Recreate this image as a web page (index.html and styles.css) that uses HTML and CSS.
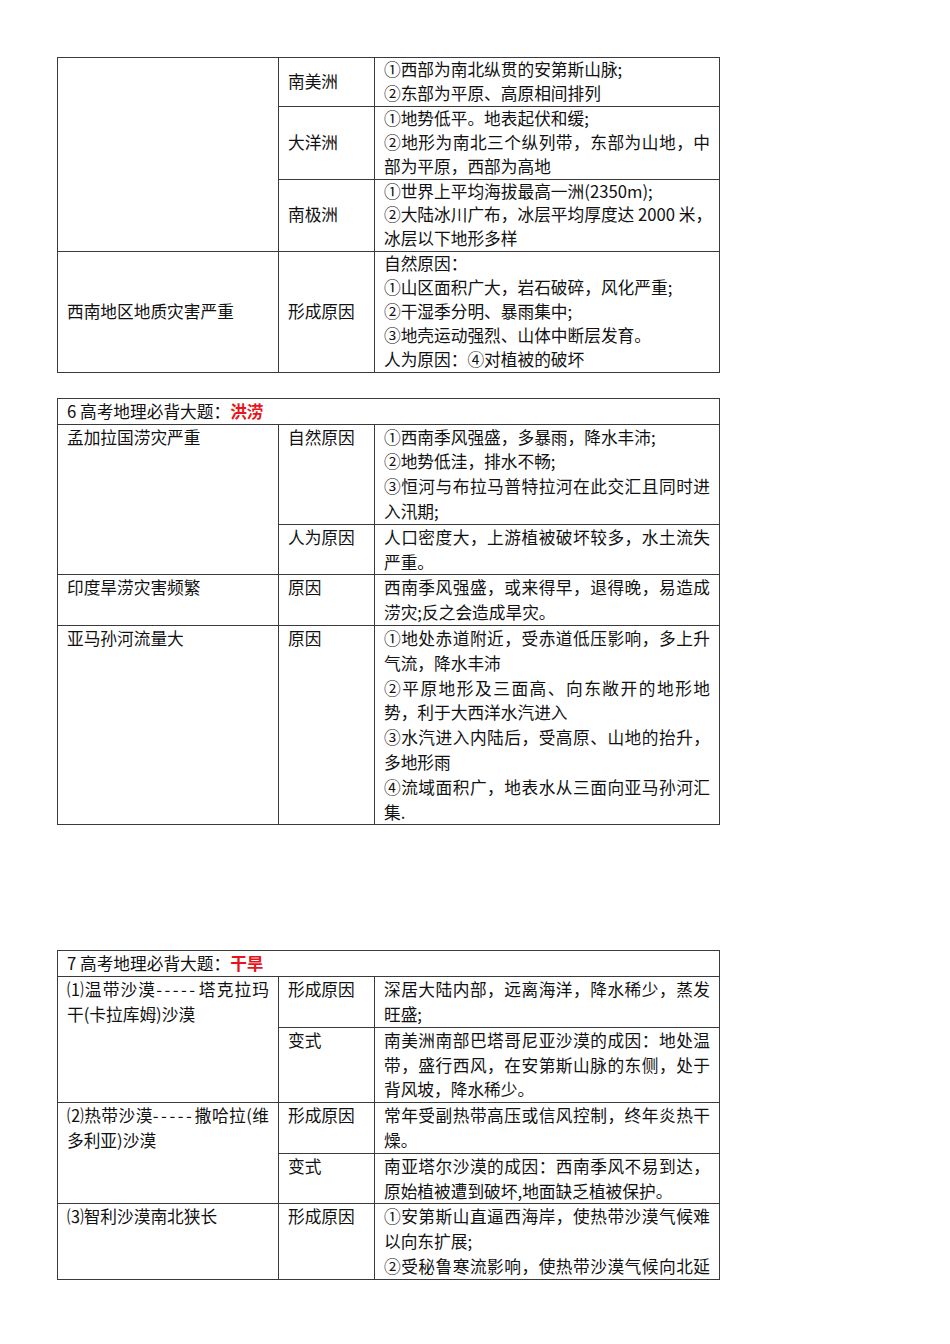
FILE: index.html
```html
<!DOCTYPE html>
<html lang="zh-CN">
<head>
<meta charset="utf-8">
<title>高考地理必背大题</title>
<link rel="stylesheet" href="styles.css">
</head>
<body>
<div class="page">

<table class="t t1">
<colgroup><col class="c1"><col class="c2"><col class="c3"></colgroup>
<tr>
<td rowspan="3"></td>
<td>南美洲</td>
<td><span class="l">①西部为南北纵贯的安第斯山脉;</span><span class="l">②东部为平原、高原相间排列</span></td>
</tr>
<tr>
<td>大洋洲</td>
<td><span class="l">①地势低平。地表起伏和缓;</span><span class="l j">②地形为南北三个纵列带，东部为山地，中</span><span class="l">部为平原，西部为高地</span></td>
</tr>
<tr>
<td>南极洲</td>
<td><span class="l">①世界上平均海拔最高一洲(2350m);</span><span class="l j">②大陆冰川广布，冰层平均厚度达 2000 米，</span><span class="l">冰层以下地形多样</span></td>
</tr>
<tr>
<td>西南地区地质灾害严重</td>
<td>形成原因</td>
<td><span class="l">自然原因：</span><span class="l">①山区面积广大，岩石破碎，风化严重;</span><span class="l">②干湿季分明、暴雨集中;</span><span class="l">③地壳运动强烈、山体中断层发育。</span><span class="l">人为原因：④对植被的破坏</span></td>
</tr>
</table>

<table class="t t2">
<colgroup><col class="c1"><col class="c2"><col class="c3"></colgroup>
<tr><td colspan="3" class="hd">6 高考地理必背大题：<span class="red">洪涝</span></td></tr>
<tr>
<td rowspan="2">孟加拉国涝灾严重</td>
<td>自然原因</td>
<td><span class="l">①西南季风强盛，多暴雨，降水丰沛;</span><span class="l">②地势低洼，排水不畅;</span><span class="l j">③恒河与布拉马普特拉河在此交汇且同时进</span><span class="l">入汛期;</span></td>
</tr>
<tr>
<td>人为原因</td>
<td><span class="l j">人口密度大，上游植被破坏较多，水土流失</span><span class="l">严重。</span></td>
</tr>
<tr>
<td>印度旱涝灾害频繁</td>
<td>原因</td>
<td><span class="l j">西南季风强盛，或来得早，退得晚，易造成</span><span class="l">涝灾;反之会造成旱灾。</span></td>
</tr>
<tr>
<td>亚马孙河流量大</td>
<td>原因</td>
<td><span class="l j">①地处赤道附近，受赤道低压影响，多上升</span><span class="l">气流，降水丰沛</span><span class="l j">②平原地形及三面高、向东敞开的地形地</span><span class="l">势，利于大西洋水汽进入</span><span class="l j">③水汽进入内陆后，受高原、山地的抬升，</span><span class="l">多地形雨</span><span class="l j">④流域面积广，地表水从三面向亚马孙河汇</span><span class="l">集.</span></td>
</tr>
</table>

<table class="t t3">
<colgroup><col class="c1"><col class="c2"><col class="c3"></colgroup>
<tr><td colspan="3" class="hd">7 高考地理必背大题：<span class="red">干旱</span></td></tr>
<tr>
<td rowspan="2"><span class="l j">⑴温带沙漠<span class="dash">-----</span>塔克拉玛</span><span class="l">干(卡拉库姆)沙漠</span></td>
<td>形成原因</td>
<td><span class="l j">深居大陆内部，远离海洋，降水稀少，蒸发</span><span class="l">旺盛;</span></td>
</tr>
<tr>
<td>变式</td>
<td><span class="l j">南美洲南部巴塔哥尼亚沙漠的成因：地处温</span><span class="l j">带，盛行西风，在安第斯山脉的东侧，处于</span><span class="l">背风坡，降水稀少。</span></td>
</tr>
<tr>
<td rowspan="2"><span class="l j">⑵热带沙漠<span class="dash">-----</span>撒哈拉(维</span><span class="l">多利亚)沙漠</span></td>
<td>形成原因</td>
<td><span class="l j">常年受副热带高压或信风控制，终年炎热干</span><span class="l">燥。</span></td>
</tr>
<tr>
<td>变式</td>
<td><span class="l j">南亚塔尔沙漠的成因：西南季风不易到达，</span><span class="l">原始植被遭到破坏,地面缺乏植被保护。</span></td>
</tr>
<tr>
<td>⑶智利沙漠南北狭长</td>
<td>形成原因</td>
<td><span class="l j">①安第斯山直逼西海岸，使热带沙漠气候难</span><span class="l">以向东扩展;</span><span class="l j">②受秘鲁寒流影响，使热带沙漠气候向北延</span></td>
</tr>
</table>

</div>
</body>
</html>
```

FILE: styles.css
```css
html, body {
  margin: 0;
  padding: 0;
  background: #ffffff;
}

body {
  font-family: "Noto Sans CJK SC", "Noto Sans", "Liberation Sans", sans-serif;
  color: #111111;
}

.page {
  padding: 57px 0 40px 57px;
}

.t {
  border-collapse: collapse;
  table-layout: fixed;
  width: 662px;
  font-size: 16.7px;
}

.t col.c1 { width: 221px; }
.t col.c2 { width: 96px; }
.t col.c3 { width: 345px; }

.t td {
  border: 1px solid #3a3a3a;
  padding: 0 9px;
  vertical-align: top;
  text-align: left;
}

.t1 td {
  vertical-align: middle;
  line-height: 23.9px;
}

.t2 td,
.t3 td {
  line-height: 24.8px;
}

.t2 {
  margin-top: 25px;
}

.t3 {
  margin-top: 125px;
}

.l {
  display: block;
  white-space: nowrap;
}

.j {
  text-align: justify;
  text-align-last: justify;
}

.dash {
  letter-spacing: 2.5px;
}

.red {
  color: #e8141b;
  font-weight: bold;
}
```
